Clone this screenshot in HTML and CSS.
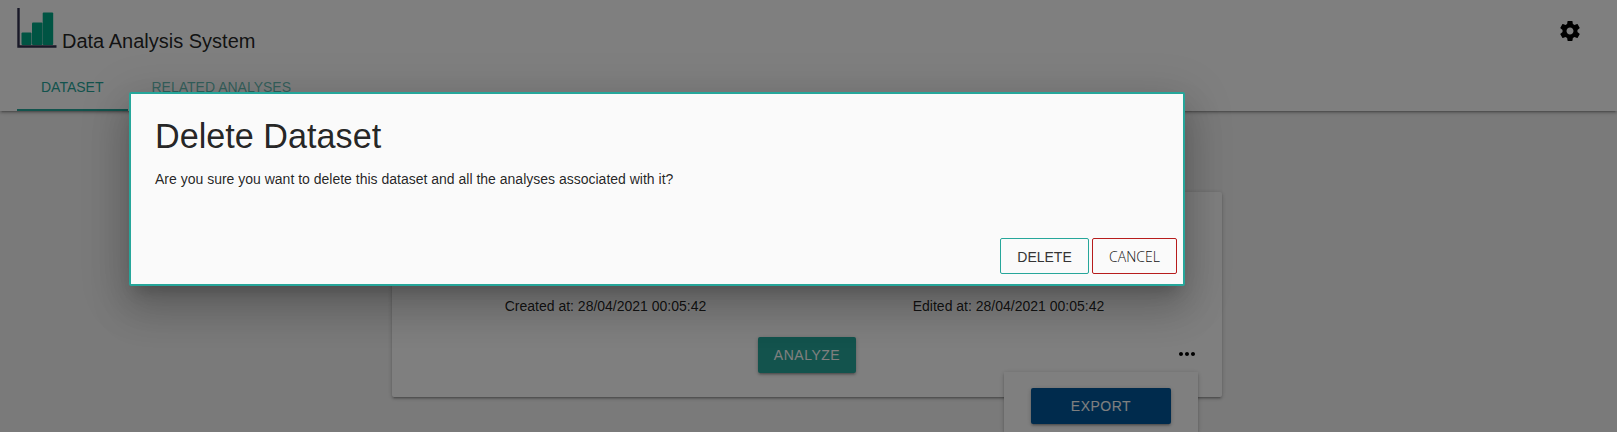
FILE: index.html
```html
<!DOCTYPE html>
<html lang="en">
<head>
<meta charset="utf-8">
<title>Data Analysis System</title>
<link rel="stylesheet" href="styles.css">
</head>
<body>
<header class="header">
  <div class="brand-row">
    <div class="brand">
      <svg class="logo" width="40" height="41" viewBox="0 0 40 41">
        <g fill="#00a887"><rect x="4.500" y="24.500" width="10" height="12.500" rx="1"/><rect x="15" y="14.500" width="10.500" height="22.500" rx="1"/><rect x="25.700" y="4.500" width="10.500" height="32.500" rx="1"/></g>
        <path d="M1.500 0V38.500H39.500" fill="none" stroke="#30304e" stroke-width="2.400"/>
      </svg>
      <span class="brand-name">Data Analysis System</span>
    </div>
    <svg class="gear" width="24" height="24" viewBox="0 0 24 24"><path d="M19.430 12.980c.04-.32.070-.64.070-.98s-.03-.66-.07-.98l2.110-1.650c.19-.15.240-.42.120-.64l-2-3.460c-.12-.22-.39-.3-.61-.22l-2.490 1c-.52-.4-1.080-.73-1.690-.98l-.38-2.650C14.460 2.180 14.250 2 14 2h-4c-.25 0-.46.180-.49.420l-.38 2.650c-.61.250-1.170.590-1.690.980l-2.490-1c-.23-.09-.49 0-.61.220l-2 3.460c-.13.220-.07.490.120.640l2.110 1.650c-.04.320-.07.650-.07.980s.03.660.070.980l-2.110 1.650c-.19.150-.24.420-.12.640l2 3.460c.12.220.390.300.610.220l2.490-1c.52.400 1.080.730 1.690.980l.38 2.650c.03.240.240.420.490.420h4c.25 0 .46-.18.490-.42l.38-2.650c.61-.25 1.170-.59 1.690-.98l2.490 1c.23.090.490 0 .61-.22l2-3.460c.12-.22.070-.49-.12-.64l-2.110-1.650zM12 15.500c-1.930 0-3.500-1.570-3.500-3.500s1.570-3.500 3.500-3.500 3.500 1.570 3.500 3.500-1.570 3.500-3.500 3.500z"/></svg>
  </div>
  <nav class="tabs">
    <a class="tab active">DATASET</a>
    <a class="tab">RELATED ANALYSES</a>
  </nav>
</header>
<main class="card">
  <div class="dates">
    <span>Created at: 28/04/2021 00:05:42</span>
    <span>Edited at: 28/04/2021 00:05:42</span>
  </div>
  <div class="actions">
    <button class="btn analyze">ANALYZE</button>
    <svg class="more" width="24" height="24" viewBox="0 0 24 24"><path d="M6 10c-1.100 0-2 .9-2 2s.9 2 2 2 2-.9 2-2-.9-2-2-2zm12 0c-1.100 0-2 .9-2 2s.9 2 2 2 2-.9 2-2-.9-2-2-2zm-6 0c-1.100 0-2 .9-2 2s.9 2 2 2 2-.9 2-2-.9-2-2-2z"/></svg>
    <div class="dropdown"><button class="btn export">EXPORT</button></div>
  </div>
</main>
<div class="overlay"></div>
<section class="modal">
  <div class="modal-content">
    <h4 class="modal-title">Delete Dataset</h4>
    <p class="modal-text">Are you sure you want to delete this dataset and all the analyses associated with it?</p>
  </div>
  <div class="modal-footer">
    <button class="outline confirm">DELETE</button>
    <button class="outline cancel">CANCEL</button>
  </div>
</section>
</body>
</html>
```
FILE: styles.css
```css
* { box-sizing: border-box; }
body {
  margin: 0;
  height: 432px;
  overflow: hidden;
  background: #f5f5f5;
  color: rgba(0, 0, 0, .87);
  font-family: "Liberation Sans", Arial, sans-serif;
  font-size: 14px;
}
.header {
  height: 111px;
  padding: 0 17px;
  background: #fff;
  box-shadow: 0 2px 2px 0 rgba(0,0,0,.14), 0 3px 1px -2px rgba(0,0,0,.12), 0 1px 5px 0 rgba(0,0,0,.2);
}
.brand-row { display: flex; justify-content: space-between; height: 63px; padding-top: 8px; }
.brand { display: flex; align-items: flex-start; gap: 5px; }
.brand-name { margin-top: 21px; font-size: 20px; line-height: 24px; }
.gear { margin: 11px 18px 0 0; }
.tabs { display: flex; height: 48px; }
.tab {
  padding: 0 24px;
  color: rgba(38, 166, 154, .7);
  font-size: 14px;
  line-height: 48px;
}
.tab.active { color: #26a69a; border-bottom: 2px solid #26a69a; }
.card {
  width: 830px;
  height: 205px;
  margin: 81px 0 0 392px;
  padding-top: 104px;
  background: #fff;
  border-radius: 2px;
  box-shadow: 0 2px 2px 0 rgba(0,0,0,.14), 0 3px 1px -2px rgba(0,0,0,.12), 0 1px 5px 0 rgba(0,0,0,.2);
}
.dates { display: grid; grid-template-columns: 1fr 1fr; padding: 0 12px; line-height: 20px; text-align: center; }
.actions { position: relative; display: flex; justify-content: center; margin-top: 21px; }
.btn {
  height: 36px;
  border: 0;
  border-radius: 2px;
  color: #fff;
  font-family: inherit;
  font-size: 14px;
  letter-spacing: .5px;
  line-height: 36px;
  padding: 0;
  box-shadow: 0 2px 2px 0 rgba(0,0,0,.14), 0 3px 1px -2px rgba(0,0,0,.12), 0 1px 5px 0 rgba(0,0,0,.2);
}
.analyze { width: 98px; background: #26a69a; }
.more { position: absolute; right: 23px; top: 5px; }
.dropdown {
  position: absolute;
  top: 35px;
  left: 612px;
  width: 194px;
  height: 60px;
  padding: 16px 27px 0;
  background: #fff;
  box-shadow: 0 2px 2px 0 rgba(0,0,0,.14), 0 3px 1px -2px rgba(0,0,0,.12), 0 1px 5px 0 rgba(0,0,0,.2);
}
.export { width: 140px; background: #01579b; }
.overlay { position: absolute; inset: 0; background: rgba(0,0,0,.5); }
.modal {
  position: absolute;
  left: 129px;
  top: 92px;
  display: flex;
  flex-direction: column;
  justify-content: space-between;
  width: 1056px;
  height: 194px;
  border: 2px solid #26a69a;
  border-radius: 2px;
  background: #fafafa;
  box-shadow: 0 24px 38px 3px rgba(0,0,0,.14), 0 9px 46px 8px rgba(0,0,0,.12), 0 11px 15px -7px rgba(0,0,0,.2);
}
.modal-content { padding: 24px; }
.modal-title { margin: 0 0 14px; font-size: 34.2px; font-weight: 400; line-height: 37px; }
.modal-text { margin: 0; line-height: 21px; }
.modal-footer { display: flex; justify-content: flex-end; gap: 3px; padding: 0 6px 10px; }
.outline {
  height: 36px;
  padding: 2px 0 0;
  border: 1px solid #26a69a;
  border-radius: 2px;
  background: transparent;
  color: #343434;
  font-family: inherit;
  font-size: 14px;
}
.confirm { width: 89px; }
.cancel { width: 85px; padding-top: 1px; border-color: #b71c1c; font-family: "Open Sans", sans-serif; font-weight: 300; color: #111; }
```
